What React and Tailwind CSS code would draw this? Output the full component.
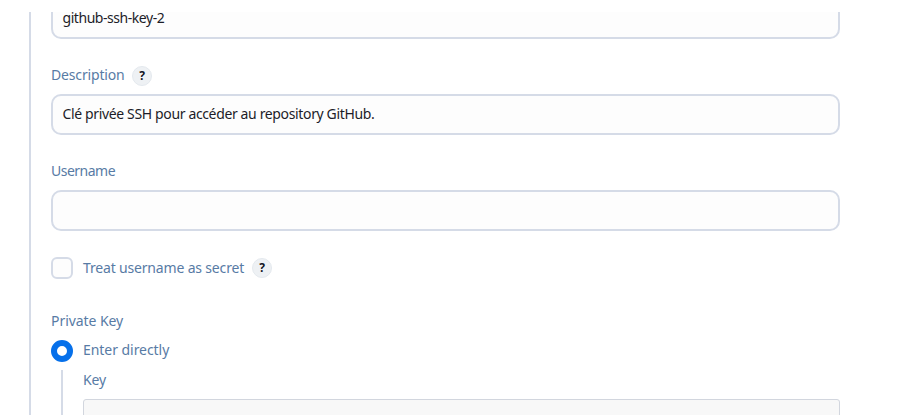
function Label({ children, className = "" }) {
  return (
    <span className={`block h-5 whitespace-nowrap text-[14px] leading-5 text-[#587ba5] ${className}`}>
      {children}
    </span>
  );
}

function Help() {
  return (
    <span className="flex size-5 items-center justify-center rounded-full border border-[#e4e9ee] bg-[#eef1f4] text-[12px] font-bold leading-none text-[#14141f]">
      ?
    </span>
  );
}

function Field({ value, className = "" }) {
  return (
    <div className="flex h-[41px] w-full shrink-0 items-center rounded-[10px] border-2 border-[#d5dbe7] bg-[#fdfdfd] px-[9.5px] pb-px">
      <span className={`whitespace-nowrap text-[14px] leading-5 text-[#1c1c28] ${className}`}>{value}</span>
    </div>
  );
}

export default function App() {
  return (
    <div className="h-[415px] w-[897px] overflow-hidden bg-white pt-3 font-['Noto_Sans',sans-serif]">
      <div className="ml-[29px] h-[403px] w-[811px] overflow-hidden border-l-2 border-[#d5dbe7] pl-5">
        <div className="-mt-3.5">
          <Field value="github-ssh-key-2" className="tracking-[-0.45px]" />
        </div>
        <div className="mt-[27px] flex h-5 items-center gap-2">
          <Label className="-mt-0.5 w-[73px] tracking-[-0.16px]">Description</Label>
          <Help />
        </div>
        <div className="mt-2">
          <Field value="Clé privée SSH pour accéder au repository GitHub." className="tracking-[-0.36px]" />
        </div>
        <Label className="mt-[26px] tracking-[-0.5px]">Username</Label>
        <div className="mt-[9px]">
          <Field value="" />
        </div>
        <div className="mt-[26px] flex h-[22px] items-center">
          <span className="size-[22px] rounded-md border-2 border-[#d5dbe7] bg-[#fdfdfd]" />
          <Label className="ml-2.5 w-[169px] tracking-[-0.17px]">Treat username as secret</Label>
          <Help />
        </div>
        <Label className="mt-8 tracking-[-0.06px]">Private Key</Label>
        <div className="mt-[9px] flex h-[22px] items-center">
          <span className="size-[22px] rounded-full border-[6px] border-[#0670ea] bg-white" />
          <Label className="-mt-0.5 ml-2.5 tracking-[-0.05px]">Enter directly</Label>
        </div>
        <div className="mt-2 ml-2.5 h-[60px] border-l-2 border-[#d5dbe7] pl-5">
          <Label className="tracking-[-0.1px]">Key</Label>
          <div className="mt-[9px] h-20 rounded-[3px] border border-[#d2d6de] bg-[#f8f8f8]" />
        </div>
      </div>
    </div>
  );
}
